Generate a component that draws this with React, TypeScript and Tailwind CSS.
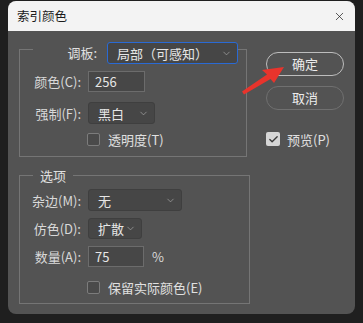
import { ChevronDown, Check, X } from "lucide-react";

const font = { fontFamily: '"Noto Sans CJK SC", "Noto Sans", sans-serif' };

const Select = ({ w, h = "h-[22px]", text, focus = false }: { w: string; h?: string; text: string; focus?: boolean }) => (
  <div
    className={`${w} ${h} flex items-center justify-between rounded-[3px] bg-[#464646] pl-[9px] pr-[5px] ${
      focus ? "border border-[#2a6ad4]" : "border border-[#3f3f3f]"
    }`}
  >
    <span className="text-[13px] leading-none text-[#e6e6e6]">{text}</span>
    <ChevronDown size={11} strokeWidth={1.5} className="text-[#a8a8a8]" />
  </div>
);

const Input = ({ w, value }: { w: string; value: string }) => (
  <div className={`${w} h-[21px] flex items-center border border-[#6c6c6c] bg-[#474747] pl-[6px]`}>
    <span className="text-[13px] leading-none text-[#e6e6e6]">{value}</span>
  </div>
);

const Box = () => <div className="w-[13px] h-[13px] rounded-[2px] border border-[#7c7c7c] bg-[#4a4a4a]" />;

const Label = ({ children }: { children: string }) => (
  <div className="w-[61px] text-right text-[13px] leading-none text-[#d9d9d9]">{children}</div>
);

export default function App() {
  return (
    <div className="relative w-[363px] h-[323px] bg-[#1f1f1f] pl-[8px] pt-[1px]" style={font}>
      <div className="w-[347px] h-[313px] rounded-[8px] overflow-hidden bg-[#535353] flex flex-col">
        <div className="h-[30px] shrink-0 bg-[#f3f3f3] flex items-center justify-between pl-[9px] pr-[9px]">
          <span className="text-[12.5px] text-[#1b1b1b]">索引颜色</span>
          <X size={13} strokeWidth={1.3} className="text-[#1b1b1b]" />
        </div>

        <div className="flex">
          <div className="pl-[11px] pt-[18px] w-[242px]">
            <div className="w-[228px] h-[108px] border border-[#757575] flex flex-col">
              <div className="-mt-[8px] h-[22px] flex items-center">
                <div className="ml-[13px] w-[74px] h-[22px] bg-[#535353] flex items-center justify-end pr-[10px] text-[13px] text-[#e0e0e0]">
                  调板:
                </div>
                <Select w="w-[131px]" text="局部（可感知）" focus />
              </div>
              <div className="mt-[7px] flex items-center gap-[7px]">
                <Label>颜色(C):</Label>
                <Input w="w-[57px]" value="256" />
              </div>
              <div className="mt-[10px] flex items-center gap-[7px]">
                <Label>强制(F):</Label>
                <Select w="w-[67px]" text="黑白" />
              </div>
              <div className="mt-[9px] ml-[67px] flex items-center gap-[8px]">
                <Box />
                <span className="text-[13px] leading-none text-[#e0e0e0]">透明度(T)</span>
              </div>
            </div>

            <div className="mt-[18px] w-[231px] h-[129px] border border-[#757575] flex flex-col">
              <div className="-mt-[8px] h-[16px] ml-[13px] self-start bg-[#535353] px-[7px] flex items-center text-[13px] text-[#e0e0e0]">
                选项
              </div>
              <div className="mt-[5px] flex items-center gap-[7px]">
                <Label>杂边(M):</Label>
                <Select w="w-[94px]" text="无" />
              </div>
              <div className="mt-[7px] flex items-center gap-[7px]">
                <Label>仿色(D):</Label>
                <Select w="w-[54px]" h="h-[21px]" text="扩散" />
              </div>
              <div className="mt-[7px] flex items-center gap-[7px]">
                <Label>数量(A):</Label>
                <Input w="w-[56px]" value="75" />
                <span className="ml-[1px] text-[13px] leading-none text-[#d9d9d9]">%</span>
              </div>
              <div className="mt-[14px] ml-[67px] flex items-center gap-[8px]">
                <Box />
                <span className="text-[13px] leading-none text-[#e0e0e0]">保留实际颜色(E)</span>
              </div>
            </div>
          </div>

          <div className="ml-[16px] pt-[21px] flex flex-col">
            <div className="w-[78px] h-[24px] rounded-full border-[1.5px] border-[#bdbdbd] flex items-center justify-center text-[13px] text-[#ececec]">
              确定
            </div>
            <div className="mt-[10px] w-[78px] h-[24px] rounded-full border border-[#707070] flex items-center justify-center text-[13px] text-[#ececec]">
              取消
            </div>
            <div className="mt-[22px] flex items-center gap-[7px]">
              <div className="w-[14px] h-[14px] rounded-[2px] bg-[#d6d6d6] flex items-center justify-center">
                <Check size={11} strokeWidth={3} className="text-[#3a3a3a]" />
              </div>
              <span className="text-[13px] leading-none text-[#e0e0e0]">预览(P)</span>
            </div>
          </div>
        </div>
      </div>

      <svg className="absolute left-0 top-0 pointer-events-none" width="363" height="323" viewBox="0 0 363 323">
        <polygon
          points="284,67 262,70 267,74.5 242,91.5 244,94.5 270.5,79 274,83"
          fill="#e8342c"
        />
      </svg>
    </div>
  );
}
